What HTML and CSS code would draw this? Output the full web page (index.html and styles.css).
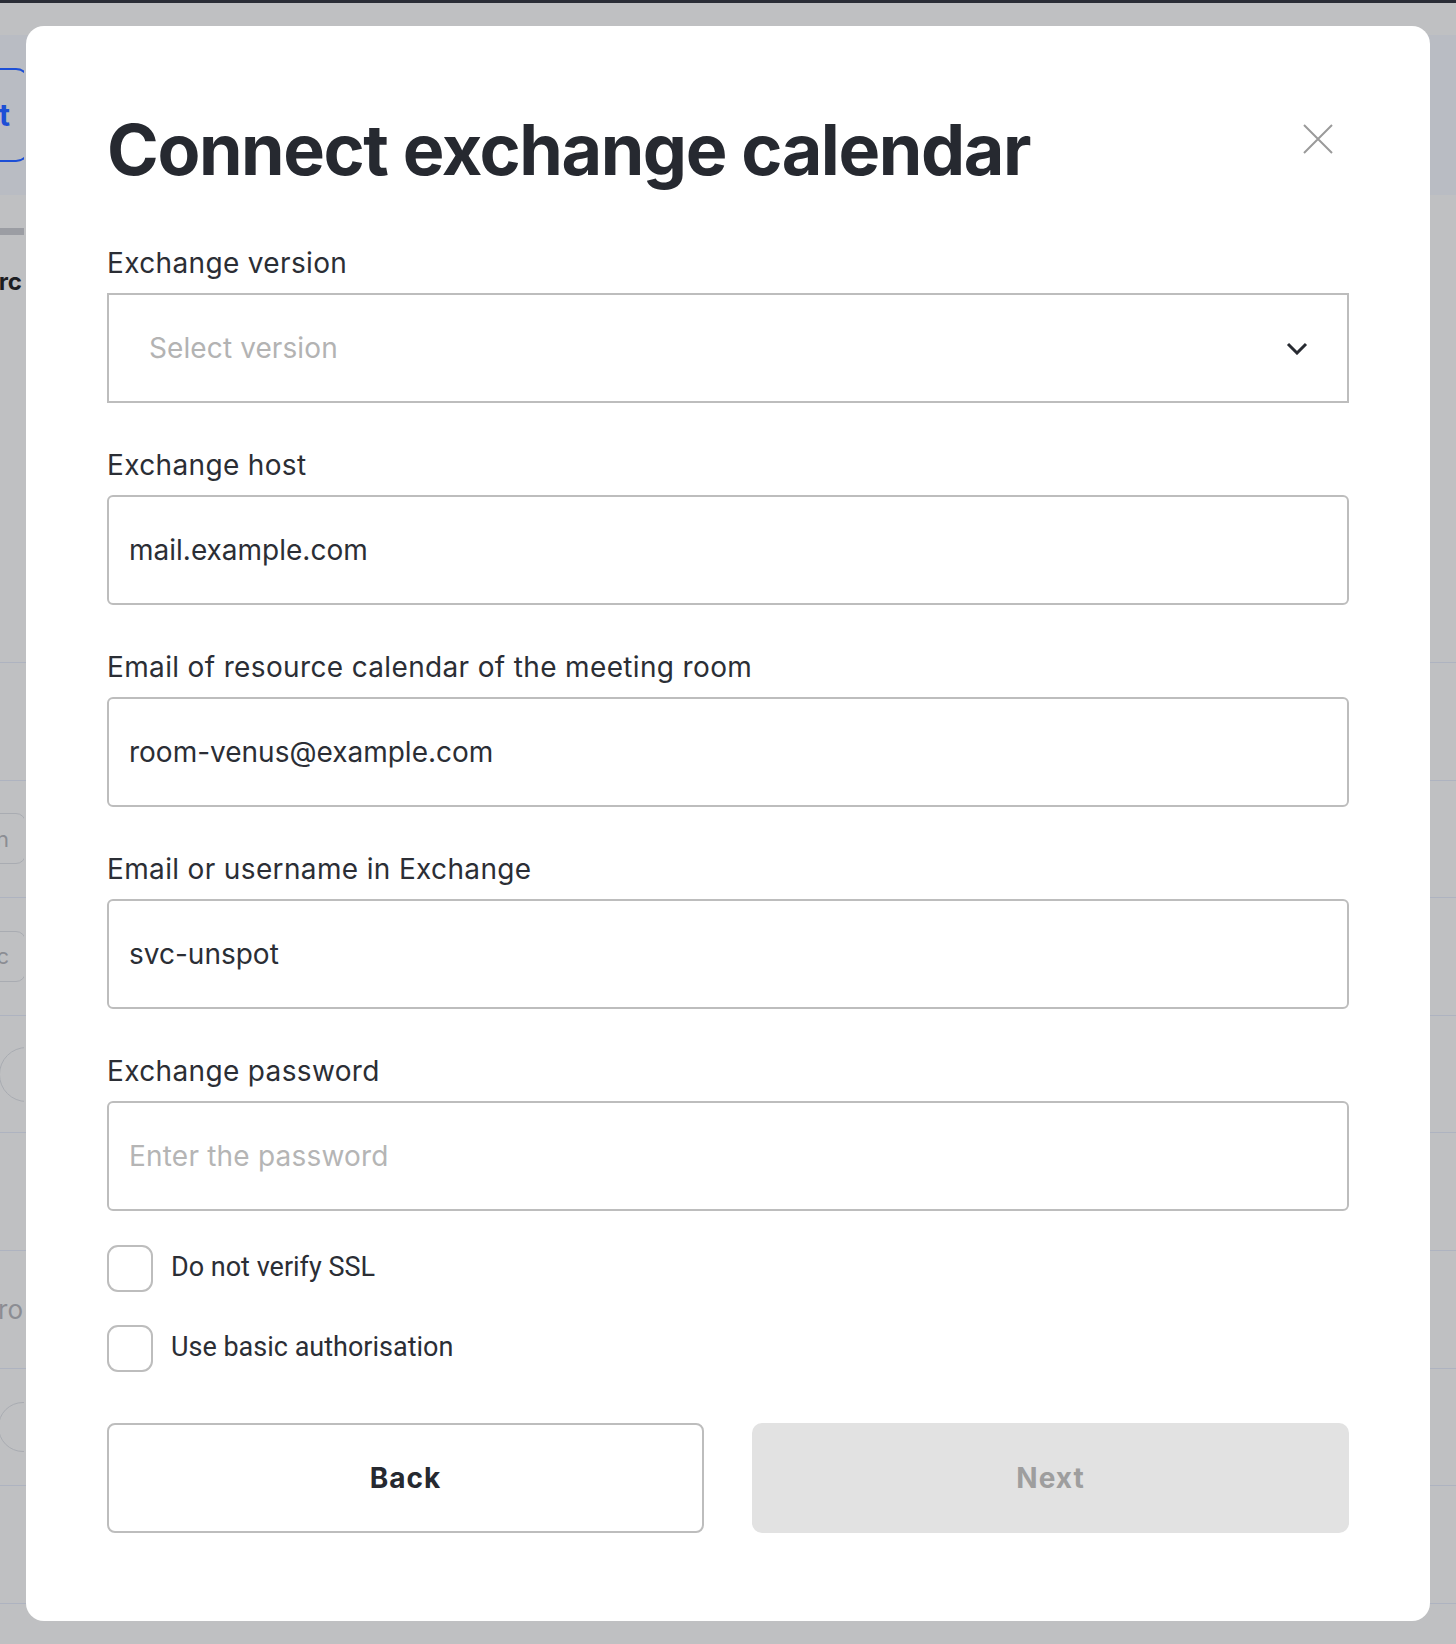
FILE: index.html
```html
<!DOCTYPE html>
<html>
  <head>
    <title>Connect exchange calendar</title>
    <link rel="stylesheet" href="styles.css">
  </head>
  <body>
    <div class="page">
      <div class="topbar"></div>

      <div class="band">
        <div class="edge">
          <span class="btn-create">Connect</span>
        </div>
      </div>

      <div class="tabs">
        <div class="edge"><span class="tab-active"></span></div>
      </div>

      <div class="heading">
        <div class="edge"><span class="heading-text">Resourc</span></div>
      </div>

      <div class="table">
        <div class="row"><div class="edge"></div></div>
        <div class="row">
          <div class="edge"><span class="pill">Open plan</span></div>
        </div>
        <div class="row">
          <div class="edge"><span class="pill">Connec</span></div>
        </div>
        <div class="row">
          <div class="edge"><span class="avatar"></span></div>
        </div>
        <div class="row"><div class="edge"></div></div>
        <div class="row">
          <div class="edge"><span class="cell-text">Floor ro</span></div>
        </div>
        <div class="row">
          <div class="edge"><span class="avatar small"></span></div>
        </div>
        <div class="row"><div class="edge"></div></div>
      </div>
    </div>

    <div class="overlay">
      <form class="modal" onsubmit="return false">
        <div class="modal-head">
          <h1 class="modal-title">Connect exchange calendar</h1>
          <button type="button" class="close" aria-label="Close">
            <svg width="30" height="30" viewBox="0 0 30 30">
              <path d="M1 1 L29 29 M29 1 L1 29" stroke="#9a9a9a" stroke-width="2" fill="none" />
            </svg>
          </button>
        </div>

        <div class="fields">
          <div class="field">
            <div class="label">Exchange version</div>
            <div class="select">
              <span class="select-placeholder">Select version</span>
              <svg width="22" height="13" viewBox="0 0 22 13">
                <path d="M2 2 L11 11 L20 2" stroke="#272a31" stroke-width="3" fill="none" />
              </svg>
            </div>
          </div>

          <div class="field">
            <div class="label">Exchange host</div>
            <input class="input" type="text" value="mail.example.com" />
          </div>

          <div class="field">
            <div class="label">Email of resource calendar of the meeting room</div>
            <input class="input" type="text" value="room-venus@example.com" />
          </div>

          <div class="field">
            <div class="label">Email or username in Exchange</div>
            <input class="input" type="text" value="svc-unspot" />
          </div>

          <div class="field">
            <div class="label">Exchange password</div>
            <input class="input" type="password" placeholder="Enter the password" />
          </div>
        </div>

        <div class="checks">
          <label class="check">
            <span class="check-box"></span>
            <span class="check-text">Do not verify SSL</span>
          </label>
          <label class="check">
            <span class="check-box"></span>
            <span class="check-text">Use basic authorisation</span>
          </label>
        </div>

        <div class="actions">
          <button type="button" class="btn btn-back">Back</button>
          <button type="submit" class="btn btn-next" disabled>Next</button>
        </div>
      </form>
    </div>
  </body>
</html>
```

FILE: styles.css
```css
body {
  margin: 0;
  background: #bfc0c2;
  font-family: "Inter", "Liberation Sans", sans-serif;
  color: #2b2e35;
}

/* page behind the dialog, dimmed */
.page {
  min-height: 1644px;
}

.topbar {
  height: 3px;
  background: #2a2d36;
}

.edge {
  width: 24px;
  overflow: hidden;
  display: flex;
  justify-content: flex-end;
  align-items: center;
  height: 100%;
}

.band {
  margin-top: 32px;
  height: 160px;
  background: #b9bcc3;
}

.btn-create {
  flex-shrink: 0;
  box-sizing: border-box;
  height: 94px;
  padding: 0 18px 0 40px;
  margin-right: -6px;
  border: 2px solid #1d4fd6;
  border-radius: 14px;
  display: flex;
  align-items: center;
  font-size: 30px;
  font-weight: 700;
  color: #1d4fd6;
}

.tabs {
  margin-top: 33px;
  height: 7px;
}

.tab-active {
  flex-shrink: 0;
  width: 24px;
  height: 7px;
  background: #9b9da3;
}

.heading {
  margin-top: 33px;
  height: 26px;
}

.heading-text {
  flex-shrink: 0;
  font-size: 24px;
  font-weight: 700;
  color: #1c1e22;
  white-space: nowrap;
  margin-right: 2px;
}

.table {
  margin-top: 368px;
  border-top: 1px solid #aeb3c0;
}

.row {
  box-sizing: border-box;
  height: 117.6px;
  border-bottom: 1px solid #aeb3c0;
}

.pill {
  flex-shrink: 0;
  box-sizing: border-box;
  height: 51px;
  padding: 0 16px 0 14px;
  margin-right: -2px;
  border: 1px solid #a9acb2;
  border-radius: 10px;
  display: flex;
  align-items: center;
  font-size: 22px;
  color: #8b8d93;
  white-space: nowrap;
}

.avatar {
  flex-shrink: 0;
  width: 53px;
  height: 53px;
  margin-right: -30px;
  border: 1px solid #a9acb2;
  border-radius: 50%;
}

.avatar.small {
  width: 48px;
  height: 48px;
  margin-right: -24px;
}

.cell-text {
  flex-shrink: 0;
  font-size: 26px;
  color: #8b8d93;
  white-space: nowrap;
  margin-right: 1px;
}

/* dialog */
.overlay {
  position: fixed;
  inset: 0;
  padding: 26px 26px 24px;
}

.modal {
  background: #fff;
  border-radius: 18px;
  padding: 82px 81px 88px;
}

.modal-head {
  display: flex;
  justify-content: space-between;
  align-items: flex-start;
}

.modal-title {
  margin: 0;
  font-size: 70px;
  line-height: 84px;
  font-weight: 700;
  letter-spacing: -1.4px;
  color: #262930;
}

.close {
  width: 62px;
  height: 62px;
  padding: 0;
  border: none;
  background: none;
  display: flex;
  align-items: center;
  justify-content: center;
  cursor: pointer;
}

.fields {
  margin-top: 53px;
  display: flex;
  flex-direction: column;
  gap: 44px;
}

.label {
  font-size: 28px;
  line-height: 36px;
  letter-spacing: 0.35px;
  margin-bottom: 12px;
}

.select {
  box-sizing: border-box;
  height: 110px;
  border: 2px solid #bdbdbd;
  padding: 0 39px 0 40px;
  display: flex;
  justify-content: space-between;
  align-items: center;
}

.select-placeholder {
  font-size: 28px;
  letter-spacing: 0.1px;
  color: #b3b3b3;
}

.input {
  display: block;
  box-sizing: border-box;
  width: 100%;
  height: 110px;
  margin: 0;
  border: 2px solid #bdbdbd;
  border-radius: 6px;
  padding: 0 20px;
  font-family: "Inter", "Liberation Sans", sans-serif;
  font-size: 28px;
  letter-spacing: 0;
  color: #2b2e35;
  outline: none;
}

.input::placeholder {
  color: #b5b5b5;
  letter-spacing: 0.2px;
}

.checks {
  margin-top: 34px;
  display: flex;
  flex-direction: column;
  gap: 33px;
}

.check {
  display: flex;
  align-items: center;
  gap: 18px;
  cursor: pointer;
}

.check-box {
  box-sizing: border-box;
  width: 46px;
  height: 47px;
  border: 2px solid #bdbdbd;
  border-radius: 11px;
}

.check-text {
  font-family: "Roboto", "Liberation Sans", sans-serif;
  font-size: 27px;
  line-height: 32px;
  padding-bottom: 4px;
  color: #2b2e35;
}

.actions {
  margin-top: 51px;
  display: grid;
  grid-template-columns: 1fr 1fr;
  gap: 48px;
}

.btn {
  height: 110px;
  font-family: "Inter", "Liberation Sans", sans-serif;
  font-size: 28px;
  font-weight: 700;
  letter-spacing: 1px;
  border-radius: 8px;
}

.btn-back {
  background: #fff;
  border: 2px solid #bdbdbd;
  color: #262930;
  cursor: pointer;
}

.btn-next {
  background: #e2e2e2;
  border: none;
  border-radius: 10px;
  color: #9e9e9e;
}
```
